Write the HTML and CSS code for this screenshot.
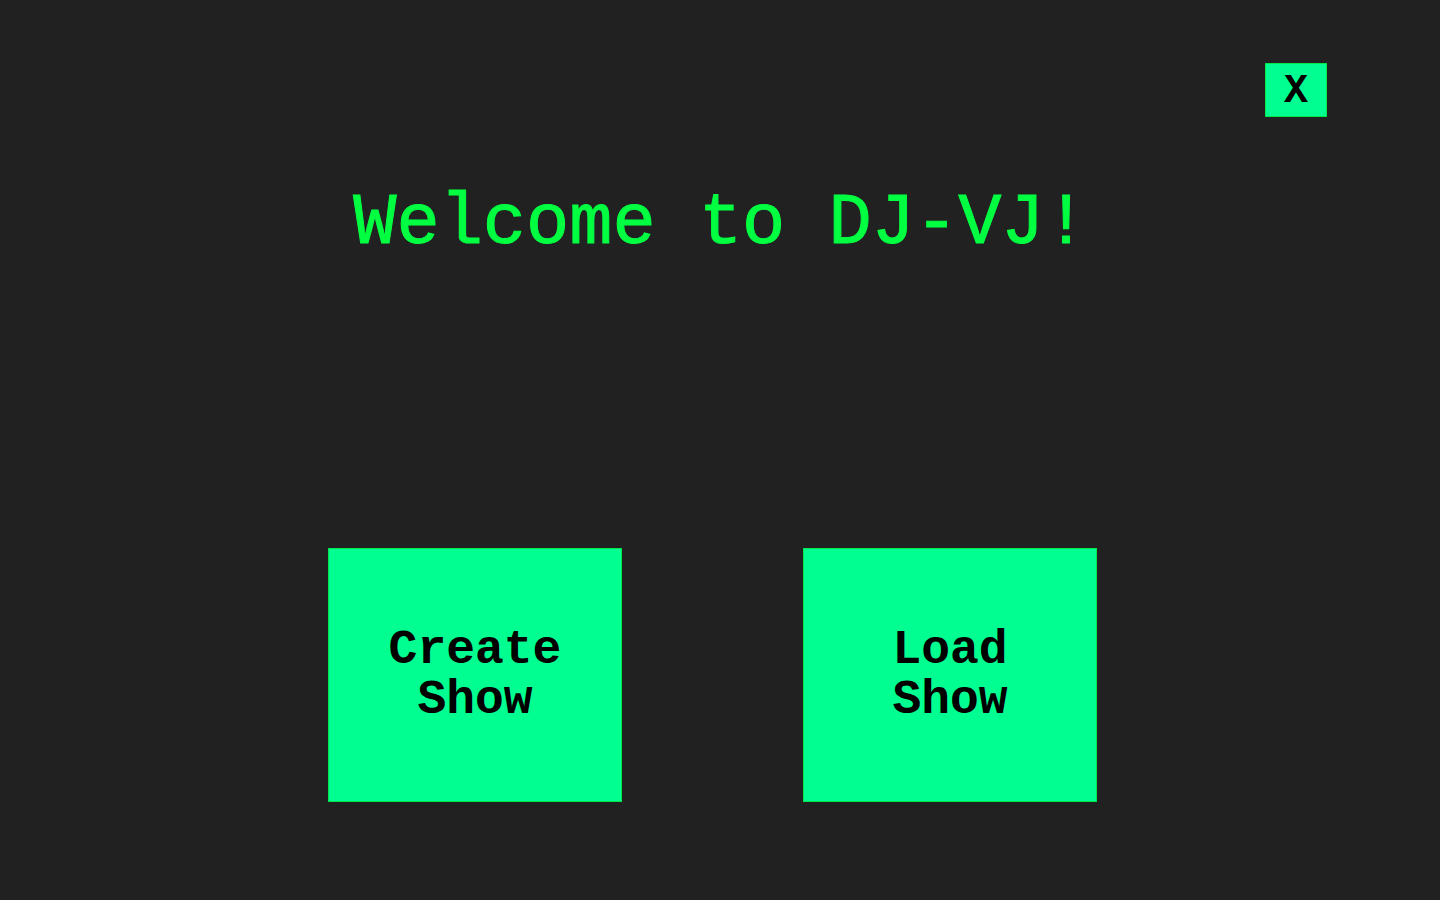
FILE: index.html
```html
<!DOCTYPE html>
<html>
<head>
<meta charset="utf-8">
<link rel="stylesheet" href="styles.css">
</head>
<body>
<div class="page">
  <div class="topbar">
    <button class="close-btn">X</button>
  </div>
  <h1 class="title">Welcome to DJ-VJ!</h1>
  <div class="actions">
    <button class="big-btn">Create<br>Show</button>
    <button class="big-btn">Load<br>Show</button>
  </div>
</div>
</body>
</html>
```

FILE: styles.css
```css
html, body {
  margin: 0;
  padding: 0;
  background: #212121;
  height: 100%;
}
.page {
  width: 1440px;
  height: 900px;
  display: flex;
  flex-direction: column;
  font-family: "Liberation Mono", "Courier New", monospace;
}
.topbar {
  display: flex;
  justify-content: flex-end;
  padding: 63px 113px 0 0;
}
.close-btn {
  width: 62px;
  height: 54px;
  background: #00ff90;
  border: 1px solid #00e64d;
  color: #000;
  font-family: "Liberation Mono", "Courier New", monospace;
  font-weight: bold;
  font-size: 40px;
  padding: 3px 0 0 0;
  margin: 0;
  line-height: 1;
}
.title {
  margin: 67px 0 0 0;
  text-align: center;
  color: #00ff40;
  font-weight: normal;
  font-size: 72px;
  line-height: 80px;
  padding-left: 1px;
  -webkit-text-stroke: 1px #00ff40;
}
.actions {
  display: flex;
  justify-content: center;
  gap: 181px;
  margin-top: 284px;
  padding-right: 15px;
}
.big-btn {
  width: 294px;
  height: 254px;
  background: #00ff90;
  border: 1px solid #00e64d;
  color: #000;
  font-family: "Liberation Mono", "Courier New", monospace;
  font-weight: bold;
  font-size: 48px;
  line-height: 50px;
  padding: 0;
  margin: 0;
}
```
